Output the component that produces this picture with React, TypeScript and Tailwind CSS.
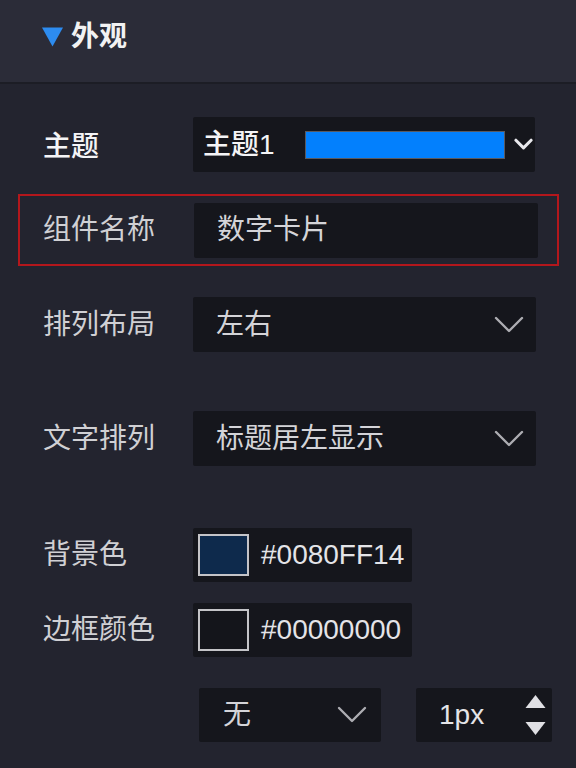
import React from "react";

const FONT = { fontFamily: '"Liberation Sans", "Noto Sans CJK SC", sans-serif' };

function Chevron({ className = "" }: { className?: string }) {
  return (
    <svg viewBox="0 0 30 18" className={className} fill="none">
      <polyline points="2,2 15,15 28,2" stroke="#adadb2" strokeWidth="2.4" strokeLinecap="round" strokeLinejoin="round" />
    </svg>
  );
}

function SelectBox({ text }: { text: string }) {
  return (
    <div className="flex h-[55px] w-[343px] items-center justify-between rounded-[2px] bg-[#15161c] pl-[23px] pr-[12px]">
      <span className="text-[28px] leading-none text-[#d4d4d8]">{text}</span>
      <Chevron className="h-[18px] w-[30px]" />
    </div>
  );
}

function Label({ children, bright = false }: { children: React.ReactNode; bright?: boolean }) {
  return (
    <div className={`w-[150px] shrink-0 text-[28px] leading-none ${bright ? "font-medium text-[#f4f4f6]" : "text-[#d0d0d4]"}`}>
      {children}
    </div>
  );
}

function ColorBox({ fill, hex }: { fill: string; hex: string }) {
  return (
    <div className="flex h-[54px] w-[219px] items-center rounded-[2px] bg-[#15161c] pl-[5px]">
      <div className={`h-[42px] w-[51px] border-2 border-[#c4c4c8] ${fill}`} />
      <span className="ml-[12px] text-[28px] leading-none text-[#e4e4e8]">{hex}</span>
    </div>
  );
}

export default function App() {
  return (
    <div style={FONT} className="h-[768px] w-[576px] overflow-hidden bg-[#23242f]">
      {/* header */}
      <div className="flex h-[82px] items-center bg-[#2b2c38] pl-[42px] pb-[8px]">
        <svg viewBox="0 0 20 18" className="h-[20px] w-[21px]">
          <polygon points="0,0 20,0 10,18" fill="#2d8cf0" />
        </svg>
        <span className="ml-[8px] text-[28px] font-bold leading-none text-[#f2f2f2]">外观</span>
      </div>
      <div className="h-[2px] bg-[#1c1d25]" />

      {/* theme row */}
      <div className="mt-[33px] flex items-center pl-[43px]">
        <div className="w-[150px] shrink-0 pt-[5px]">
          <Label bright>主题</Label>
        </div>
        <div className="flex h-[55px] w-[342px] items-center rounded-[2px] bg-[#15161c] pl-[10px]">
          <span className="w-[102px] text-[28px] font-medium leading-none text-[#f4f4f6]">主题1</span>
          <div className="h-[28px] w-[200px] border border-[#5a5a60] bg-[#0380fd]" />
          <svg viewBox="0 0 20 13" className="ml-[9px] h-[13px] w-[19px]" fill="none">
            <polyline points="2,2 10,10 18,2" stroke="#e8e8ec" strokeWidth="3.2" strokeLinecap="round" strokeLinejoin="round" />
          </svg>
        </div>
      </div>

      {/* name row with red outline */}
      <div className="ml-[18px] mt-[22px] flex h-[72px] w-[541px] items-center border-2 border-[#b3171c] pl-[23px]">
        <Label>组件名称</Label>
        <div className="ml-[1px] flex h-[55px] w-[344px] items-center rounded-[2px] bg-[#15161c] pl-[23px]">
          <span className="text-[28px] leading-none text-[#d4d4d8]">数字卡片</span>
        </div>
      </div>

      {/* layout row */}
      <div className="mt-[31px] flex items-center pl-[43px]">
        <Label>排列布局</Label>
        <SelectBox text="左右" />
      </div>

      {/* text arrange row */}
      <div className="mt-[59px] flex items-center pl-[43px]">
        <Label>文字排列</Label>
        <SelectBox text="标题居左显示" />
      </div>

      {/* bg color */}
      <div className="mt-[62px] flex items-center pl-[43px]">
        <Label>背景色</Label>
        <ColorBox fill="bg-[#0e2a4c]" hex="#0080FF14" />
      </div>

      {/* border color */}
      <div className="mt-[21px] flex items-center pl-[43px]">
        <Label>边框颜色</Label>
        <ColorBox fill="bg-[#14151b]" hex="#00000000" />
      </div>

      {/* bottom row */}
      <div className="mt-[31px] flex items-center pl-[199px]">
        <div className="flex h-[54px] w-[182px] items-center justify-between rounded-[2px] bg-[#15161c] pl-[24px] pr-[14px]">
          <span className="text-[28px] leading-none text-[#d4d4d8]">无</span>
          <Chevron className="h-[18px] w-[30px]" />
        </div>
        <div className="ml-[35px] flex h-[54px] w-[136px] items-center justify-between rounded-[2px] bg-[#15161c] pl-[23px] pr-[6px]">
          <span className="text-[28px] leading-none text-[#e4e4e8]">1px</span>
          <div className="flex flex-col gap-[14px]">
            <svg viewBox="0 0 20 13" className="h-[13px] w-[21px]">
              <polygon points="10,0 20,13 0,13" fill="#e0e0e4" />
            </svg>
            <svg viewBox="0 0 20 13" className="h-[13px] w-[21px]">
              <polygon points="0,0 20,0 10,13" fill="#e0e0e4" />
            </svg>
          </div>
        </div>
      </div>
    </div>
  );
}
